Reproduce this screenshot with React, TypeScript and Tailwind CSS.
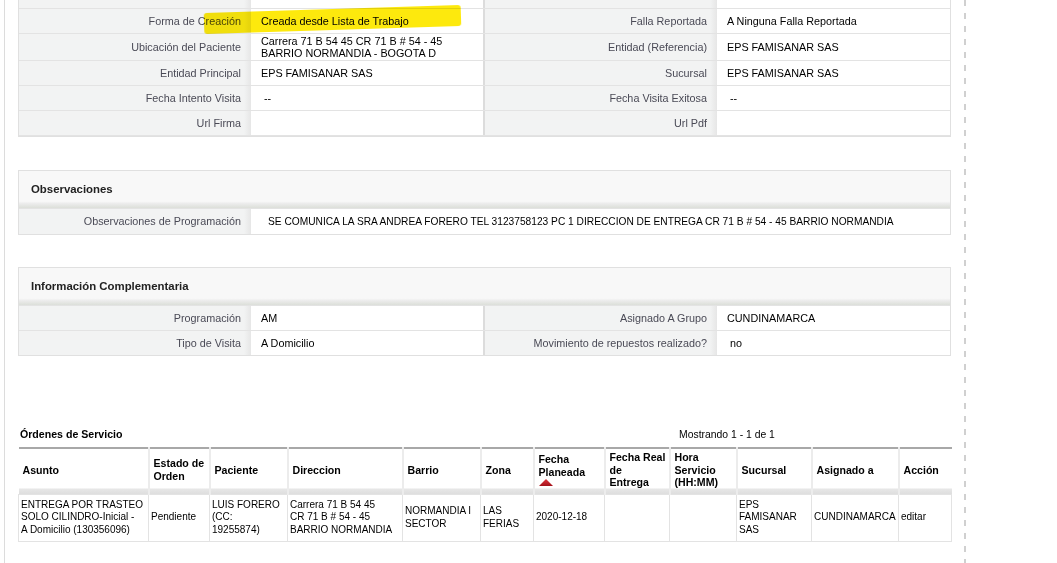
import React from 'react';

const font = "font-['Liberation_Sans',Arial,sans-serif]";

type Pair = { label: string; value: React.ReactNode };

const topRows: [Pair, Pair, string][] = [
  [{ label: 'N. de Atención - Desde', value: '00:00' }, { label: 'N. de Atención - Hasta', value: '11:00' }, 'h-[25px]'],
  [{ label: 'Forma de Creación', value: 'Creada desde Lista de Trabajo' }, { label: 'Falla Reportada', value: 'A Ninguna Falla Reportada' }, 'h-[25px]'],
  [
    { label: 'Ubicación del Paciente', value: (<>Carrera 71 B 54 45 CR 71 B # 54 - 45<br />BARRIO NORMANDIA - BOGOTA D</>) },
    { label: 'Entidad (Referencia)', value: 'EPS FAMISANAR SAS' },
    'h-[27px]',
  ],
  [{ label: 'Entidad Principal', value: 'EPS FAMISANAR SAS' }, { label: 'Sucursal', value: 'EPS FAMISANAR SAS' }, 'h-[25px]'],
  [{ label: 'Fecha Intento Visita', value: <span className="pl-[3px]">--</span> }, { label: 'Fecha Visita Exitosa', value: <span className="pl-[3px]">--</span> }, 'h-[25px]'],
  [{ label: 'Url Firma', value: '' }, { label: 'Url Pdf', value: '' }, 'h-[25px]'],
];

const Label = ({ children, left }: { children: React.ReactNode; left?: boolean }) => (
  <div
    className={`flex items-center justify-end pr-[10px] text-[10.8px] text-[#4a4a56] bg-[linear-gradient(to_right,#f2f3f3_0%,#f2f3f3_97%,#e6e6e6_100%)] ${left ? '' : 'border-l-2 border-[#dcdcdc]'}`}
  >
    {children}
  </div>
);

const Value = ({ children }: { children: React.ReactNode }) => (
  <div className="flex items-center pl-[10px] text-[10.8px] leading-[12px] text-black bg-white">{children}</div>
);

const PanelHeader = ({ title }: { title: string }) => (
  <div className="h-[38px] flex items-center pl-[12px] bg-[linear-gradient(to_bottom,#f8f8f8_0%,#f8f8f8_82%,#ececec_88%,#dcdfd9_100%)] border-b border-[#e3e3e3]">
    <span className="text-[11.4px] font-bold text-[#222]">{title}</span>
  </div>
);

const cols = ['w-[130px]', 'w-[61px]', 'w-[78px]', 'w-[115px]', 'w-[78px]', 'w-[53px]', 'w-[71px]', 'w-[65px]', 'w-[67px]', 'w-[75px]', 'w-[87px]', 'w-[53px]'];

const App = () => {
  return (
    <div className={`${font} relative h-[563px] w-[1057px] overflow-hidden bg-white`}>
      <div className="flex h-full">
        <div className="w-[4px]" />
        <div className="h-full w-[960px] border-l border-[#dcdcdc] pl-[13px]">
          {/* top detail block */}
          <div className="relative -mt-[16px] w-[933px] border border-[#e0e0e0] border-t-0">
            {topRows.map(([a, b, h], i) => (
              <div key={i} className={`grid grid-cols-[232px_232px_234px_233px] ${h} border-b border-[#e3e3e3] last:border-b-0`}>
                <Label left>{a.label}</Label>
                <Value>{a.value}</Value>
                <Label>{b.label}</Label>
                <Value>{b.value}</Value>
              </div>
            ))}
            {/* highlighter mark */}
            <div className="absolute left-[185px] top-[25px] h-[21px] w-[257px] -rotate-[1.8deg] rounded-[3px] bg-[#fde800] opacity-95 mix-blend-multiply blur-[0.6px]" />
          </div>

          {/* Observaciones */}
          <div className="mt-[33px] w-[933px] border border-[#e0e0e0]">
            <PanelHeader title="Observaciones" />
            <div className="grid grid-cols-[232px_700px] h-[25px]">
              <Label left>Observaciones de Programación</Label>
              <div className="flex items-center pl-[17px] text-[10.2px] text-black">
                SE COMUNICA LA SRA ANDREA FORERO TEL 3123758123 PC 1 DIRECCION DE ENTREGA CR 71 B # 54 - 45 BARRIO NORMANDIA
              </div>
            </div>
          </div>

          {/* Información Complementaria */}
          <div className="mt-[32px] w-[933px] border border-[#e0e0e0]">
            <PanelHeader title="Información Complementaria" />
            <div className="grid grid-cols-[232px_232px_234px_233px] h-[25px] border-b border-[#e3e3e3]">
              <Label left>Programación</Label>
              <Value>AM</Value>
              <Label>Asignado A Grupo</Label>
              <Value>CUNDINAMARCA</Value>
            </div>
            <div className="grid grid-cols-[232px_232px_234px_233px] h-[24px]">
              <Label left>Tipo de Visita</Label>
              <Value>A Domicilio</Value>
              <Label>Movimiento de repuestos realizado?</Label>
              <Value><span className="pl-[3px]">no</span></Value>
            </div>
          </div>

          {/* Órdenes de Servicio */}
          <div className="mt-[71px] w-[933px]">
            <div className="flex h-[16px] items-center">
              <span className="w-[661px] pl-[2px] text-[10.6px] font-bold text-black">Órdenes de Servicio</span>
              <span className="text-[10.4px] text-black">Mostrando 1 - 1 de 1</span>
            </div>
            <table className="mt-[4px] w-[933px] table-fixed border-collapse border-t-2 border-[#a8a8a8] text-[10px] leading-[12.5px]">
              <colgroup>
                {cols.map((c, i) => (
                  <col key={i} className={c} />
                ))}
              </colgroup>
              <thead>
                <tr className="h-[46px] bg-[linear-gradient(to_bottom,#ffffff_0%,#ffffff_86%,#e6e6e6_90%,#dedede_100%)] text-left text-black">
                  {[
                    'Asunto',
                    <>Estado de<br />Orden</>,
                    'Paciente',
                    'Direccion',
                    'Barrio',
                    'Zona',
                    <>
                      Fecha
                      <br />
                      Planeada
                      <br />
                      <svg width="14" height="7" viewBox="0 0 14 7" className="mt-[1px]">
                        <defs>
                          <linearGradient id="tri" x1="0" y1="0" x2="0" y2="1">
                            <stop offset="0" stopColor="#e0353d" />
                            <stop offset="1" stopColor="#a3121a" />
                          </linearGradient>
                        </defs>
                        <polygon points="7,0 14,7 0,7" fill="url(#tri)" />
                      </svg>
                    </>,
                    <>Fecha Real<br />de<br />Entrega</>,
                    <>Hora<br />Servicio<br />(HH:MM)</>,
                    'Sucursal',
                    'Asignado a',
                    'Acción',
                  ].map((h, i) => (
                    <th key={i} className="border-x-2 border-[#ececec] pl-[4px] pr-[2px] pt-[2px] pb-[5px] align-middle text-[10.6px] leading-[12.5px] font-bold whitespace-nowrap first:border-l-0 last:border-r-0">
                      {h}
                    </th>
                  ))}
                </tr>
              </thead>
              <tbody>
                <tr className="h-[47px] border-b border-[#e3e3e3] text-black">
                  {[
                    <>ENTREGA POR TRASTEO<br />SOLO CILINDRO-Inicial -<br />A Domicilio (130356096)</>,
                    'Pendiente',
                    <>LUIS FORERO<br />(CC:<br />19255874)</>,
                    <>Carrera 71 B 54 45<br />CR 71 B # 54 - 45<br />BARRIO NORMANDIA</>,
                    <>NORMANDIA I<br />SECTOR</>,
                    <>LAS<br />FERIAS</>,
                    '2020-12-18',
                    '',
                    '',
                    <>EPS<br />FAMISANAR<br />SAS</>,
                    'CUNDINAMARCA',
                    'editar',
                  ].map((c, i) => (
                    <td key={i} className="border border-[#e3e3e3] px-[2px] align-middle whitespace-nowrap">
                      {c}
                    </td>
                  ))}
                </tr>
              </tbody>
            </table>
          </div>
        </div>
        {/* dashed divider */}
        <div className="h-full w-[2px] bg-[repeating-linear-gradient(to_bottom,#d0d0d0_0px,#d0d0d0_6px,transparent_6px,transparent_13px)]" />
      </div>
    </div>
  );
};

export default App;
